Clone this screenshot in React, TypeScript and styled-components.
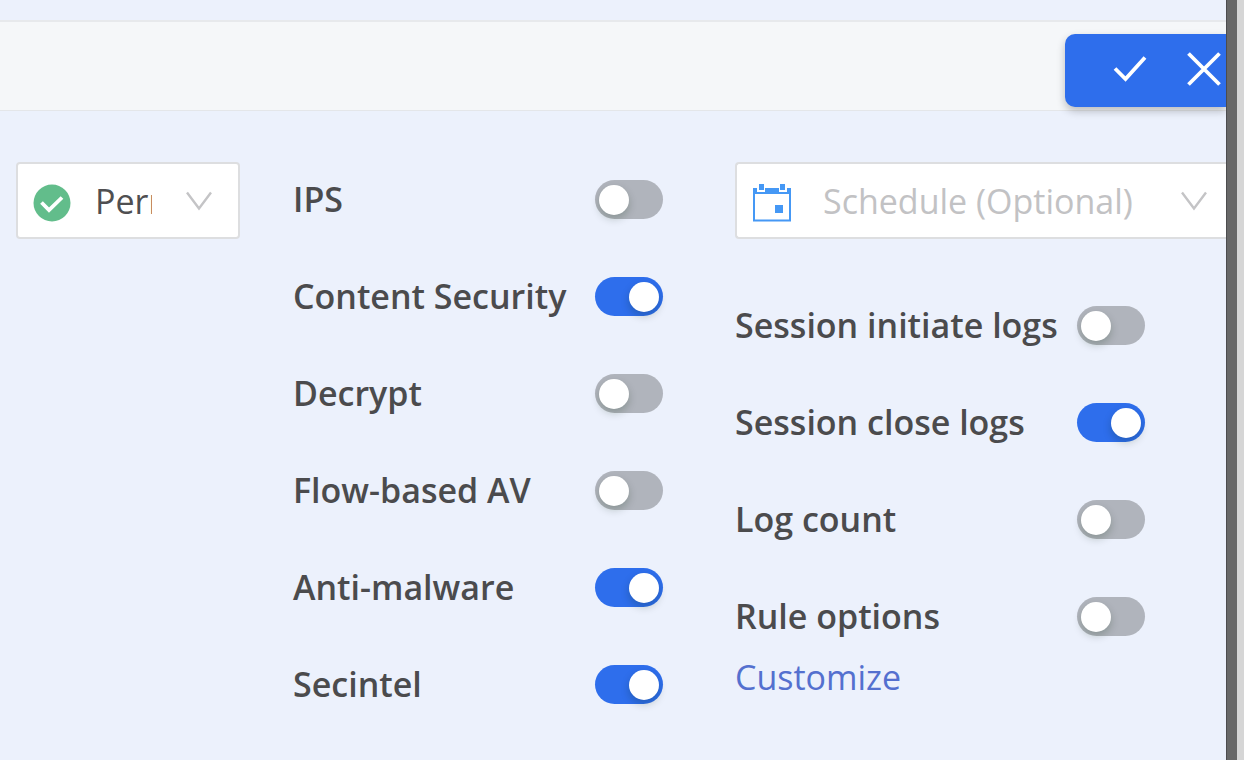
import React, { useState } from "react";
import styled, { createGlobalStyle } from "styled-components";

const GlobalStyle = createGlobalStyle`
  * { box-sizing: border-box; }
  body {
    margin: 0;
    background: #ecf1fc;
    color: #4b4b4d;
    font-family: "Open Sans", "Noto Sans", sans-serif;
    font-size: 34px;
    line-height: 48px;
  }
`;

const Page = styled.div`
  display: flex;
  min-height: 100vh;
`;

const Panel = styled.main`
  flex: 1;
  min-width: 0;
  overflow: hidden;
  padding-top: 20px;
`;

const PanelEdge = styled.div`
  width: 11px;
  background: #686868;
  border-left: 1px solid #4c4c4e;
`;

const Backdrop = styled.div`
  width: 7px;
  background: #d6d6d6;
`;

const Toolbar = styled.header`
  display: flex;
  justify-content: flex-end;
  height: 91px;
  padding-top: 12px;
  background: #f5f7f9;
  border-top: 2px solid #e7e9ec;
  border-bottom: 1px solid #e4e6e9;
`;

const ActionGroup = styled.div`
  display: flex;
  height: 73px;
  padding-left: 28px;
  border-radius: 10px 0 0 10px;
  background: #2e6eec;
  box-shadow: 0 4px 8px rgba(0, 0, 0, 0.24);
`;

const ActionButton = styled.button`
  display: flex;
  align-items: center;
  justify-content: center;
  width: 74px;
  padding: 0 0 4px;
  border: 0;
  background: none;
  color: #fff;
  cursor: pointer;

  &:last-child {
    justify-content: flex-end;
    width: 59px;
    padding-right: 5px;
  }
`;

const Editor = styled.form`
  display: grid;
  grid-template-columns: 224px 370px minmax(0, 1fr);
  align-items: start;
  padding: 51px 0 40px 16px;
`;

const SelectBox = styled.div<{ $bleed?: boolean }>`
  display: flex;
  align-items: center;
  height: 77px;
  padding-left: ${(p) => (p.$bleed ? "16px" : "15px")};
  background: #fff;
  border: 2px solid #dddee0;
  border-right-width: ${(p) => (p.$bleed ? "0" : "2px")};
  border-radius: ${(p) => (p.$bleed ? "4px 0 0 4px" : "4px")};

  svg {
    flex: none;
  }
`;

const IconSlot = styled.span`
  display: flex;
  padding-top: 4px;
`;

const SelectInput = styled.select<{ $gap: number; $tail: number; $muted?: boolean }>`
  flex: 1;
  min-width: 0;
  height: 48px;
  margin: 0 ${(p) => p.$tail}px 0 ${(p) => p.$gap}px;
  padding: 0;
  appearance: none;
  border: 0;
  outline: 0;
  background: none;
  color: ${(p) => (p.$muted ? "#c2c2c4" : "#4f4f51")};
  font: inherit;
  cursor: pointer;
`;

const ChevronSlot = styled.span`
  display: flex;
  margin-right: 26px;
  pointer-events: none;
`;

const BleedChevronSlot = styled(ChevronSlot)`
  margin-right: 19px;
`;

const Services = styled.div`
  padding-top: 13px;
  margin-left: 53px;
  width: 370px;
`;

const Options = styled.div`
  margin-left: 125px;
`;

const LogSettings = styled.div`
  width: 410px;
  padding-top: 62px;
`;

const SwitchList = styled.ul`
  display: flex;
  flex-direction: column;
  gap: 49px;
  margin: 0;
  padding: 0;
  list-style: none;
`;

const SwitchRow = styled.li`
  display: flex;
  align-items: center;
  justify-content: space-between;
  height: 48px;
`;

const SwitchLabel = styled.label`
  padding-bottom: 1px;
  font-weight: 600;
  white-space: nowrap;
`;

const Switch = styled.input`
  display: flex;
  flex: none;
  align-items: center;
  width: 68px;
  height: 39px;
  margin: 0;
  padding: 1px 4px 0;
  appearance: none;
  border-radius: 20px;
  background: #b0b4bc;
  cursor: pointer;

  &::before {
    content: "";
    width: 30px;
    height: 30px;
    border-radius: 50%;
    background: #fff;
    box-shadow: 0 4px 8px rgba(0, 35, 11, 0.22);
  }

  &:checked {
    justify-content: flex-end;
    background: #2e6eec;
  }
`;

const CustomizeLink = styled.a`
  display: inline-block;
  margin-top: 13px;
  color: #5470cf;
  text-decoration: none;
`;

const CheckIcon = () => (
  <svg width="34" height="28" viewBox="0 0 34 28" fill="none" stroke="currentColor" strokeWidth="3.8" aria-hidden="true">
    <path d="M2 13.500 L12.500 24 L32 2.500" />
  </svg>
);

const CloseIcon = () => (
  <svg width="34" height="34" viewBox="0 0 34 34" fill="none" stroke="currentColor" strokeWidth="3.8" aria-hidden="true">
    <path d="M1.5 1.5 L32.5 32.5 M32.5 1.5 L1.5 32.5" />
  </svg>
);

const PermitIcon = () => (
  <svg width="38" height="38" viewBox="0 0 38 38" aria-hidden="true">
    <circle cx="19" cy="19" r="18.5" fill="#62bd8b" />
    <path d="M8.5 18.5 L16 26 L29 13.5" fill="none" stroke="#fff" strokeWidth="3.8" />
  </svg>
);

const CalendarIcon = () => (
  <svg width="38" height="38" viewBox="0 0 38 38" aria-hidden="true">
    <path d="M1 8 V36.500 H37 V8" fill="none" stroke="#4598f5" strokeWidth="2" />
    <path d="M0 4 H4 V8 H12 V4 H26 V8 H34 V4 H38 V10 H0 Z" fill="#4598f5" />
    <path d="M6 0 H11 V6 H6 Z M27 0 H32 V6 H27 Z" fill="#4598f5" />
    <path d="M22 21 H30 V29 H22 Z" fill="#4598f5" />
  </svg>
);

const ChevronIcon = () => (
  <svg width="26" height="20" viewBox="0 0 26 20" fill="none" stroke="#c4c4c6" strokeWidth="2.4" aria-hidden="true">
    <path d="M1 1.500 L13 17.500 L25 1.500" />
  </svg>
);

type Setting = { id: string; label: string; on: boolean };

const services: Setting[] = [
  { id: "ips", label: "IPS", on: false },
  { id: "content-security", label: "Content Security", on: true },
  { id: "decrypt", label: "Decrypt", on: false },
  { id: "flow-av", label: "Flow-based AV", on: false },
  { id: "anti-malware", label: "Anti-malware", on: true },
  { id: "secintel", label: "Secintel", on: true },
];

const logging: Setting[] = [
  { id: "session-initiate", label: "Session initiate logs", on: false },
  { id: "session-close", label: "Session close logs", on: true },
  { id: "log-count", label: "Log count", on: false },
  { id: "rule-options", label: "Rule options", on: false },
];

function Switches({ settings }: { settings: Setting[] }) {
  return (
    <SwitchList>
      {settings.map((s) => (
        <SwitchRow key={s.id}>
          <SwitchLabel htmlFor={s.id}>{s.label}</SwitchLabel>
          <Switch id={s.id} type="checkbox" role="switch" defaultChecked={s.on} />
        </SwitchRow>
      ))}
    </SwitchList>
  );
}

export default function App() {
  const [schedule, setSchedule] = useState("");

  return (
    <>
      <GlobalStyle />
      <Page>
        <Panel>
          <Toolbar>
            <ActionGroup>
              <ActionButton type="submit" form="rule-editor" aria-label="Save">
                <CheckIcon />
              </ActionButton>
              <ActionButton type="button" aria-label="Cancel">
                <CloseIcon />
              </ActionButton>
            </ActionGroup>
          </Toolbar>
          <Editor id="rule-editor" onSubmit={(e) => e.preventDefault()}>
            <SelectBox>
              <IconSlot>
                <PermitIcon />
              </IconSlot>
              <SelectInput $gap={24} $tail={34} aria-label="Action" defaultValue="permit">
                <option value="permit">Permit</option>
              </SelectInput>
              <ChevronSlot>
                <ChevronIcon />
              </ChevronSlot>
            </SelectBox>
            <Services>
              <Switches settings={services} />
            </Services>
            <Options>
              <SelectBox $bleed>
                <IconSlot>
                  <CalendarIcon />
                </IconSlot>
                <SelectInput
                  $gap={32}
                  $tail={32}
                  $muted={schedule === ""}
                  aria-label="Schedule"
                  value={schedule}
                  onChange={(e) => setSchedule(e.target.value)}
                >
                  <option value="">Schedule (Optional)</option>
                </SelectInput>
                <BleedChevronSlot>
                  <ChevronIcon />
                </BleedChevronSlot>
              </SelectBox>
              <LogSettings>
                <Switches settings={logging} />
                <CustomizeLink href="#customize">Customize</CustomizeLink>
              </LogSettings>
            </Options>
          </Editor>
        </Panel>
        <PanelEdge />
        <Backdrop />
      </Page>
    </>
  );
}
